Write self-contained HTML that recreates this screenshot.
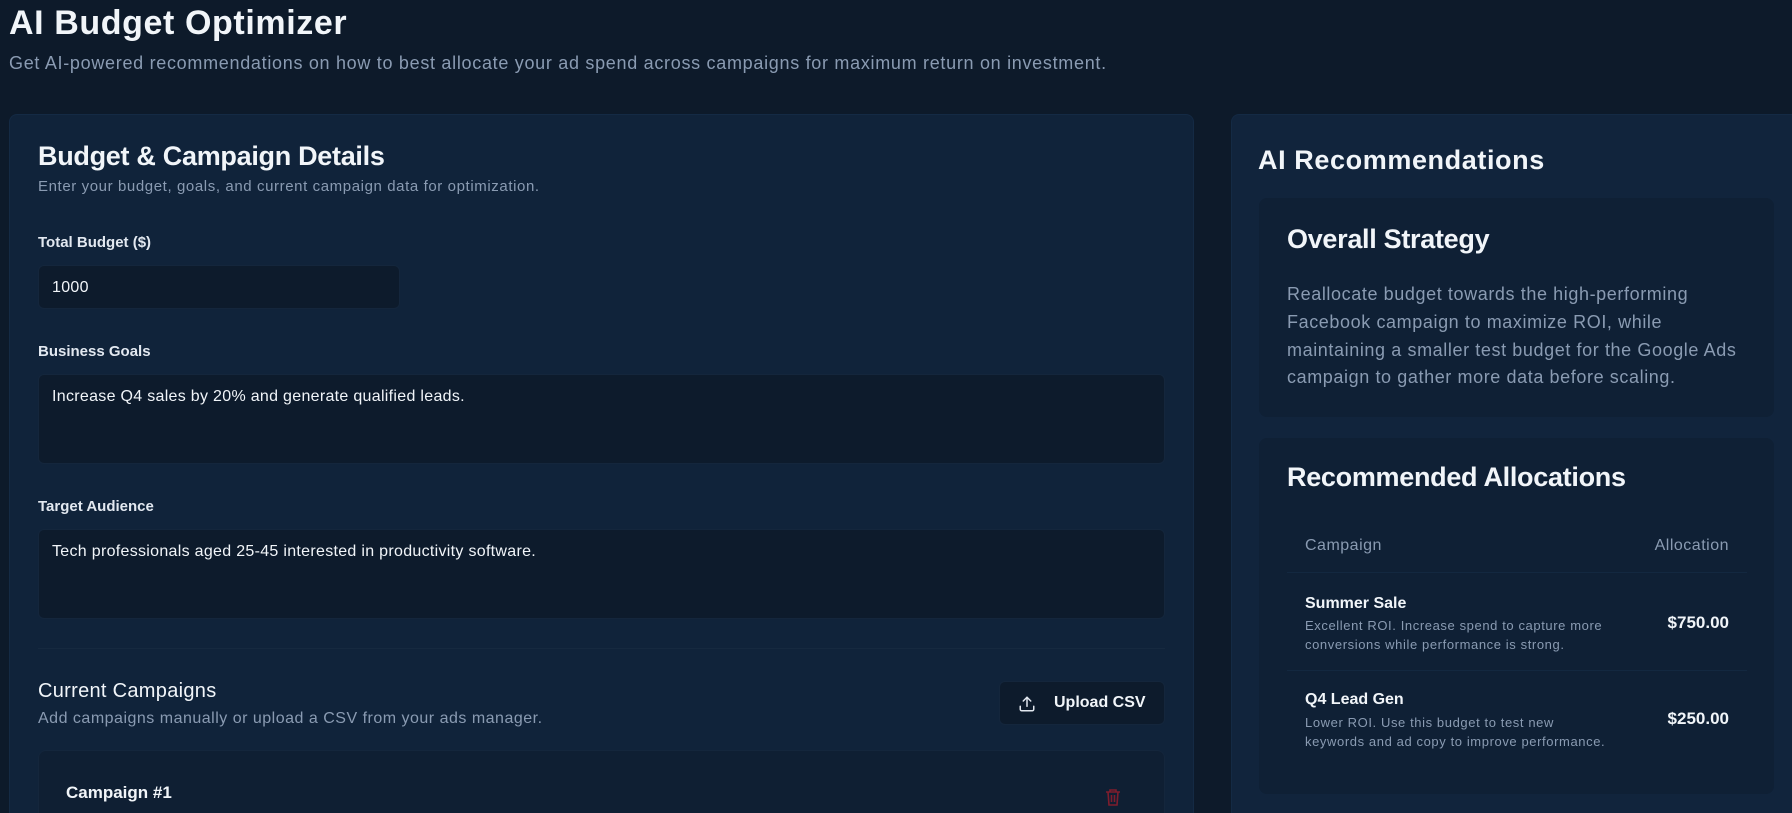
<!DOCTYPE html>
<html><head><style>
*{box-sizing:border-box;margin:0;padding:0}
html,body{width:1792px;height:813px;overflow:hidden}
body{background:#0d1a2a;font-family:"Liberation Sans",sans-serif;color:#f1f5f9;position:relative}
.a{position:absolute;white-space:nowrap}
.card{position:absolute;background:#10233a;border-radius:8px 8px 0 0;border:1px solid #142a44;border-bottom:none}
.box{position:absolute;background:#0f2035;border-radius:8px}
.inp{position:absolute;background:#0d1b2c;border:1px solid #14263c;border-radius:6px;font-size:16px;color:#f1f5f9;padding:13px 13px;letter-spacing:0.3px}
.lbl{font-size:15px;font-weight:bold;color:#e2e8f0}
.muted{color:#8a9bb2;letter-spacing:0.5px}
</style></head><body>
<div class="a" style="left:9px;top:4px;font-size:34px;font-weight:bold;letter-spacing:0.6px">AI Budget Optimizer</div>
<div class="a muted" style="left:9px;top:53px;font-size:18px;letter-spacing:0.7px">Get AI-powered recommendations on how to best allocate your ad spend across campaigns for maximum return on investment.</div>

<div class="card" style="left:9px;top:114px;width:1185px;height:699px"></div>
<div class="a" style="left:38px;top:141px;font-size:27px;font-weight:bold;letter-spacing:-0.3px">Budget &amp; Campaign Details</div>
<div class="a muted" style="left:38px;top:178px;font-size:15px;letter-spacing:0.6px">Enter your budget, goals, and current campaign data for optimization.</div>
<div class="a lbl" style="left:38px;top:234px">Total Budget ($)</div>
<div class="inp" style="left:38px;top:265px;width:362px;height:44px">1000</div>
<div class="a lbl" style="left:38px;top:343px">Business Goals</div>
<div class="inp" style="left:38px;top:374px;width:1127px;height:90px">Increase Q4 sales by 20% and generate qualified leads.</div>
<div class="a lbl" style="left:38px;top:498px">Target Audience</div>
<div class="inp" style="left:38px;top:529px;width:1127px;height:90px">Tech professionals aged 25-45 interested in productivity software.</div>
<div class="a" style="left:38px;top:648px;width:1127px;height:1px;background:#16293f"></div>
<div class="a" style="left:38px;top:680px;font-size:20px;letter-spacing:0.3px">Current Campaigns</div>
<div class="a muted" style="left:38px;top:710px;font-size:16px;letter-spacing:0.5px">Add campaigns manually or upload a CSV from your ads manager.</div>
<div class="a" style="left:999px;top:681px;width:166px;height:44px;background:#0d1b2c;border:1px solid #14263c;border-radius:6px;font-size:16px;font-weight:bold;padding:12px 0 0 54px">Upload CSV
<svg style="position:absolute;left:18px;top:13px" width="18" height="18" viewBox="0 0 24 24" fill="none" stroke="#e2e8f0" stroke-width="2" stroke-linecap="round" stroke-linejoin="round"><path d="M21 15v4a2 2 0 0 1-2 2H5a2 2 0 0 1-2-2v-4"/><path d="M17 8l-5-5-5 5"/><path d="M12 3v12"/></svg></div>
<div class="a" style="left:38px;top:750px;width:1127px;height:63px;background:#0f1f33;border:1px solid #14263c;border-bottom:none;border-radius:8px 8px 0 0"></div>
<div class="a" style="left:66px;top:783px;font-size:17px;font-weight:bold">Campaign #1</div>
<svg class="a" style="left:1105px;top:788px" width="16" height="18" viewBox="0 0 16 18" fill="none" stroke="#7f1d2d" stroke-width="1.6"><path d="M1 4h14M5 4V2h6v2M3 4l1 13h8l1-13M6.5 7v7M9.5 7v7"/></svg>

<div class="card" style="left:1231px;top:114px;width:561px;height:699px;background:#11243c;border-right:none;border-radius:8px 0 0 0"></div>
<div class="a" style="left:1258px;top:145px;font-size:27px;font-weight:bold;letter-spacing:0.6px">AI Recommendations</div>
<div class="box" style="left:1259px;top:198px;width:515px;height:219px"></div>
<div class="a" style="left:1287px;top:224px;font-size:27px;font-weight:bold;letter-spacing:-0.3px">Overall Strategy</div>
<div class="a muted" style="left:1287px;top:281px;font-size:18px;line-height:27.8px;white-space:normal;width:460px;letter-spacing:0.6px">Reallocate budget towards the high-performing Facebook campaign to maximize ROI, while maintaining a smaller test budget for the Google Ads campaign to gather more data before scaling.</div>
<div class="box" style="left:1259px;top:438px;width:515px;height:356px"></div>
<div class="a" style="left:1287px;top:462px;font-size:27px;font-weight:bold;letter-spacing:-0.3px">Recommended Allocations</div>
<div class="a muted" style="left:1305px;top:537px;font-size:16px">Campaign</div>
<div class="a muted" style="left:1609px;top:537px;font-size:16px;width:120px;text-align:right">Allocation</div>
<div class="a" style="left:1287px;top:572px;width:460px;height:1px;background:#132840"></div>
<div class="a" style="left:1287px;top:670px;width:460px;height:1px;background:#132840"></div>
<div class="a" style="left:1305px;top:595px;font-size:16px;font-weight:bold">Summer Sale</div>
<div class="a muted" style="left:1305px;top:617px;font-size:13px;line-height:18.5px;letter-spacing:0.6px">Excellent ROI. Increase spend to capture more<br>conversions while performance is strong.</div>
<div class="a" style="left:1609px;top:613px;width:120px;text-align:right;font-size:17px;font-weight:bold">$750.00</div>
<div class="a" style="left:1305px;top:691px;font-size:16px;font-weight:bold">Q4 Lead Gen</div>
<div class="a muted" style="left:1305px;top:714px;font-size:13px;line-height:18.5px;letter-spacing:0.6px">Lower ROI. Use this budget to test new<br>keywords and ad copy to improve performance.</div>
<div class="a" style="left:1609px;top:709px;width:120px;text-align:right;font-size:17px;font-weight:bold">$250.00</div>
</body></html>
